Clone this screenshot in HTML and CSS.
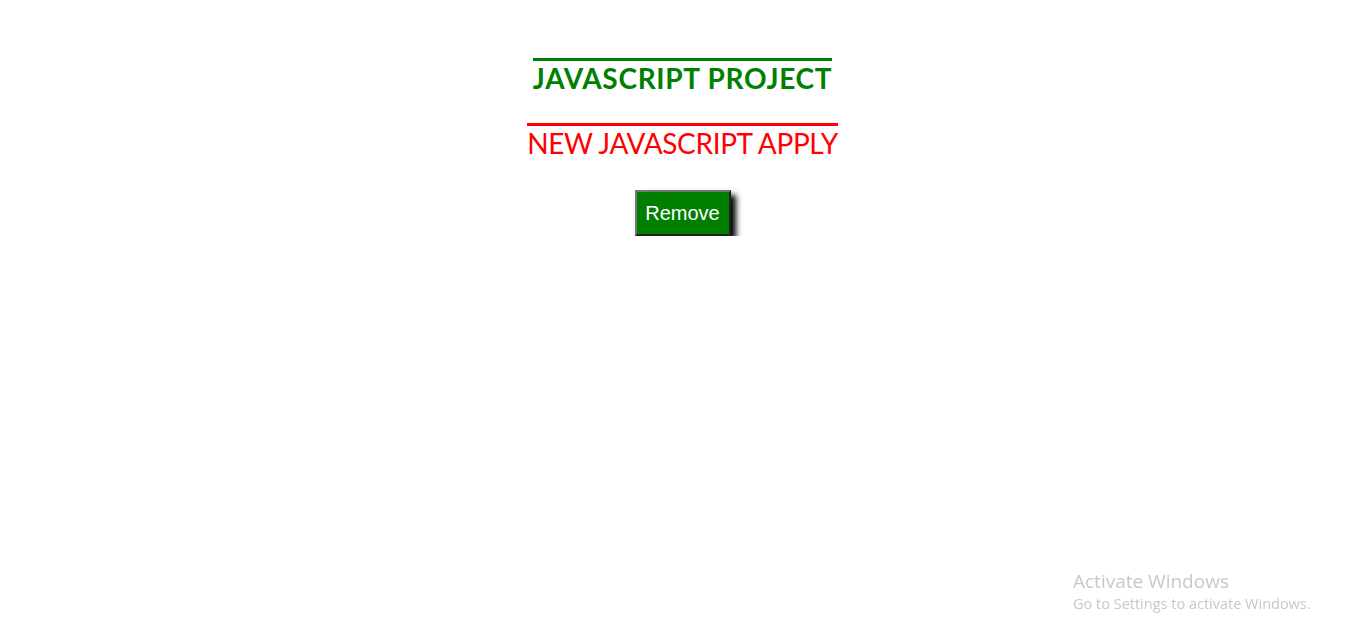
FILE: index.html
```html
<!DOCTYPE html>
<html>
<head>
<meta charset="utf-8">
<link rel="stylesheet" href="styles.css">
</head>
<body>
<main class="page">
  <h1 class="title">JAVASCRIPT PROJECT</h1>
  <h2 class="subtitle">NEW JAVASCRIPT APPLY</h2>
  <button class="remove">Remove</button>
</main>
<div class="watermark">
  <div class="wm-title">Activate Windows</div>
  <div class="wm-sub">Go to Settings to activate Windows.</div>
</div>
</body>
</html>
```
FILE: styles.css
```css
html, body {
  margin: 0;
  padding: 0;
  background: #fff;
}
.page {
  display: flex;
  flex-direction: column;
  align-items: center;
  padding-top: 58px;
  font-family: "Lato", "DejaVu Sans", sans-serif;
}
.title {
  margin: 0;
  border-top: 3px solid #008000;
  color: #008000;
  font-size: 28px;
  font-weight: 700;
  line-height: 34px;
  letter-spacing: 0.7px;
}
.subtitle {
  margin: 28px 0 0;
  border-top: 3px solid #ff0000;
  color: #ff0000;
  font-size: 28px;
  font-weight: 400;
  line-height: 34px;
  letter-spacing: -0.35px;
}
.remove {
  margin-top: 30px;
  width: 96px;
  height: 46px;
  background: #008000;
  color: #fff;
  border: 2px outset #767676;
  font-family: "Liberation Sans", Arial, sans-serif;
  font-size: 20px;
  box-shadow: 5px 5px 6px #000;
  padding: 0;
}
.watermark {
  position: fixed;
  left: 1073px;
  top: 569px;
  color: #c8c8c8;
  font-family: "Open Sans", "Noto Sans", sans-serif;
}
.wm-title {
  font-size: 19px;
  line-height: 25px;
}
.wm-sub {
  font-size: 14.5px;
  line-height: 19px;
}
```
